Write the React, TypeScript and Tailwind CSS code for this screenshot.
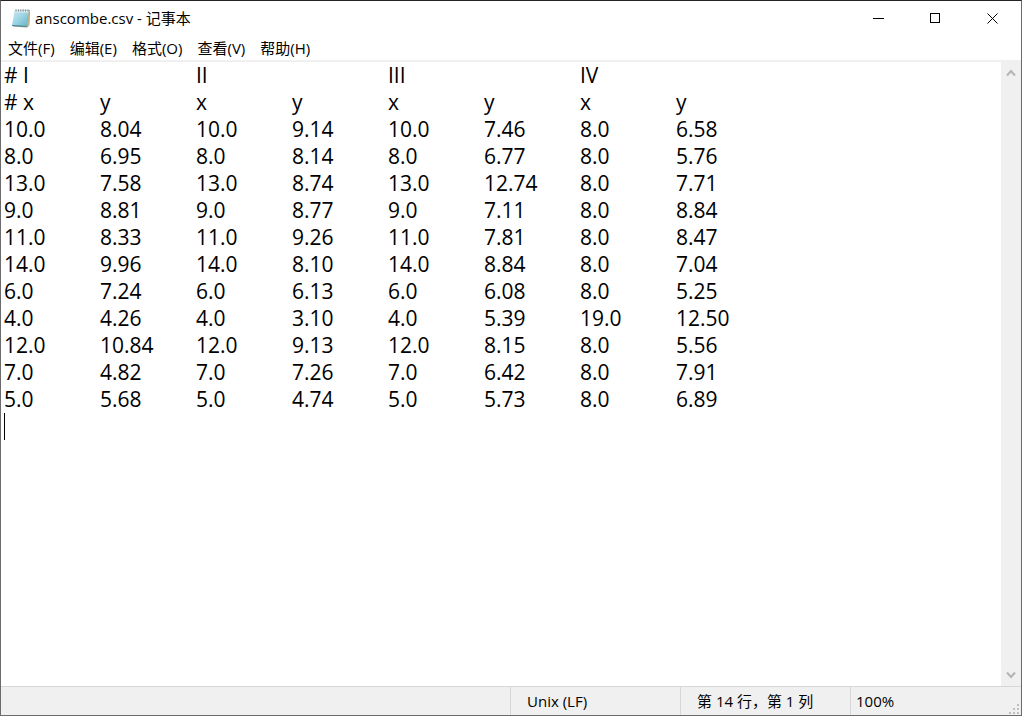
import React from 'react';

interface MenuEntry {
    label: string;
    accessKey: string;
}

const MENUS: MenuEntry[] = [
    { label: '文件', accessKey: 'F' },
    { label: '编辑', accessKey: 'E' },
    { label: '格式', accessKey: 'O' },
    { label: '查看', accessKey: 'V' },
    { label: '帮助', accessKey: 'H' },
];

const LINE_HEIGHT = 27;

const FILE_TEXT = [
    '# I\t\tII\t\tIII\t\tIV',
    '# x\ty\tx\ty\tx\ty\tx\ty',
    '10.0\t8.04\t10.0\t9.14\t10.0\t7.46\t8.0\t6.58',
    '8.0\t6.95\t8.0\t8.14\t8.0\t6.77\t8.0\t5.76',
    '13.0\t7.58\t13.0\t8.74\t13.0\t12.74\t8.0\t7.71',
    '9.0\t8.81\t9.0\t8.77\t9.0\t7.11\t8.0\t8.84',
    '11.0\t8.33\t11.0\t9.26\t11.0\t7.81\t8.0\t8.47',
    '14.0\t9.96\t14.0\t8.10\t14.0\t8.84\t8.0\t7.04',
    '6.0\t7.24\t6.0\t6.13\t6.0\t6.08\t8.0\t5.25',
    '4.0\t4.26\t4.0\t3.10\t4.0\t5.39\t19.0\t12.50',
    '12.0\t10.84\t12.0\t9.13\t12.0\t8.15\t8.0\t5.56',
    '7.0\t4.82\t7.0\t7.26\t7.0\t6.42\t8.0\t7.91',
    '5.0\t5.68\t5.0\t4.74\t5.0\t5.73\t8.0\t6.89',
    '',
].join('\n');

const NotepadIcon: React.FC = () => (
    <svg width="20" height="20" viewBox="0 0 20 20" aria-hidden="true">
        <defs>
            <linearGradient id="cover" x1="0" y1="0" x2="1" y2="1">
                <stop offset="0" stopColor="#c9e8f1" />
                <stop offset="0.5" stopColor="#9bd3e3" />
                <stop offset="1" stopColor="#62b4cb" />
            </linearGradient>
        </defs>
        <path d="M4 2.5 L19 2 L18.2 17.6 L16 19.4 L2 18.6 Z" fill="#8a9a80" />
        <path d="M17.2 3 L19 2.6 L18.2 17.4 L15.6 18.8 Z" fill="#b6b58c" />
        <path d="M3.6 2.6 L17.6 2.6 L15.4 18.2 L1 17.4 Z" fill="url(#cover)" />
        <path d="M3.6 2.4 H17.8 L17.5 4.4 H3.3 Z" fill="#e4f0f3" />
        <path d="M5 1.2 V3.6 M7.4 1.2 V3.6 M9.8 1.2 V3.6 M12.2 1.2 V3.6 M14.6 1.2 V3.6 M17 1.2 V3.6" stroke="#7d929b" strokeWidth="1" />
        <path d="M1 17.5 L15.4 18.4" stroke="#4b8798" strokeWidth="1" />
    </svg>
);

const TitleBar: React.FC = () => (
    <header className="flex h-[34px] shrink-0 items-center justify-between">
        <div className="flex items-center gap-1 pl-[10px]">
            <NotepadIcon />
            <h1 className="text-[15px] leading-5">anscombe.csv - 记事本</h1>
        </div>
        <div className="flex h-full">
            <button aria-label="最小化" className="flex w-[57px] items-center justify-center hover:bg-gray-200">
                <svg width="11" height="11" viewBox="0 0 11 11" stroke="#000" fill="none"><path d="M0 5.5 H11" /></svg>
            </button>
            <button aria-label="最大化" className="flex w-[57px] items-center justify-center hover:bg-gray-200">
                <svg width="11" height="11" viewBox="0 0 11 11" stroke="#000" fill="none"><rect x="0.5" y="0.5" width="9" height="9" /></svg>
            </button>
            <button aria-label="关闭" className="flex w-[57px] items-center justify-center hover:bg-red-500">
                <svg width="11" height="11" viewBox="0 0 11 11" stroke="#000" fill="none"><path d="M0.5 0.5 L10.5 10.5 M10.5 0.5 L0.5 10.5" /></svg>
            </button>
        </div>
    </header>
);

const MenuBar: React.FC = () => (
    <nav className="flex h-[25px] shrink-0 items-center gap-[15px] pl-[7px]">
        {MENUS.map((menu) => (
            <button key={menu.accessKey} className="text-[15px] leading-5 whitespace-nowrap hover:bg-sky-100">
                {menu.label}({menu.accessKey})
            </button>
        ))}
    </nav>
);

const ScrollBar: React.FC = () => (
    <div className="flex w-5 shrink-0 flex-col justify-between bg-[#f0f0f0]">
        <button aria-label="向上滚动" className="flex h-[22px] items-center justify-center">
            <svg width="10" height="8" viewBox="0 0 10 8" fill="none" stroke="#b4b4b4" strokeWidth="2"><path d="M1 6.5 L5 2 L9 6.5" /></svg>
        </button>
        <button aria-label="向下滚动" className="flex h-[22px] items-center justify-center">
            <svg width="10" height="8" viewBox="0 0 10 8" fill="none" stroke="#b4b4b4" strokeWidth="2"><path d="M1 1.5 L5 6 L9 1.5" /></svg>
        </button>
    </div>
);

const StatusBar: React.FC<{ line: number; column: number }> = ({ line, column }) => (
    <footer className="flex h-[29px] shrink-0 justify-end border-t border-[#d7d7d7] bg-[#f0f0f0] text-[15px] leading-7">
        <div className="w-[170px] border-l border-[#d7d7d7] pl-4">Unix (LF)</div>
        <div className="w-[170px] border-l border-[#d7d7d7] pl-4">第 {line} 行，第 {column} 列</div>
        <div className="flex w-[171px] items-end justify-between border-l border-[#d7d7d7] pl-[5px]">
            <span>100%</span>
            <svg width="12" height="12" viewBox="0 0 12 12" fill="#bfbfbf" aria-hidden="true">
                <path d="M8 1h2v2H8z M8 5h2v2H8z M8 9h2v2H8z M4 5h2v2H4z M4 9h2v2H4z M0 9h2v2H0z" />
            </svg>
        </div>
    </footer>
);

export default function App() {
    const [text, setText] = React.useState(FILE_TEXT);
    const [caretLine, setCaretLine] = React.useState(14);
    const [caretColumn, setCaretColumn] = React.useState(1);
    const [typing, setTyping] = React.useState(false);

    const handleSelect = (e: React.SyntheticEvent<HTMLTextAreaElement>) => {
        const before = e.currentTarget.value.slice(0, e.currentTarget.selectionStart).split('\n');
        setCaretLine(before.length);
        setCaretColumn(before[before.length - 1].length + 1);
    };

    return (
        <div className="flex h-screen flex-col border border-[#6b6b6b] border-t-[#262326] bg-white font-['Open_Sans','Noto_Sans_CJK_SC',sans-serif] text-black">
            <TitleBar />
            <MenuBar />
            <main className="flex min-h-0 flex-1 border-t-2 border-[#f0f0f0]">
                <div className="relative flex flex-1">
                    <textarea
                        aria-label="文本编辑器"
                        value={text}
                        spellCheck={false}
                        wrap="off"
                        onChange={(e) => setText(e.target.value)}
                        onSelect={handleSelect}
                        onFocus={() => setTyping(true)}
                        className="flex-1 resize-none overflow-hidden pl-[3px] text-[21px] leading-[27px] outline-none [tab-size:96px]"
                    />
                    {/* Caret shown until the editor takes focus */}
                    {!typing && (
                        <span
                            className="pointer-events-none absolute left-[3px] h-[27px] w-px bg-black"
                            style={{ top: (caretLine - 1) * LINE_HEIGHT }}
                        />
                    )}
                </div>
                <ScrollBar />
            </main>
            <StatusBar line={caretLine} column={caretColumn} />
        </div>
    );
}
